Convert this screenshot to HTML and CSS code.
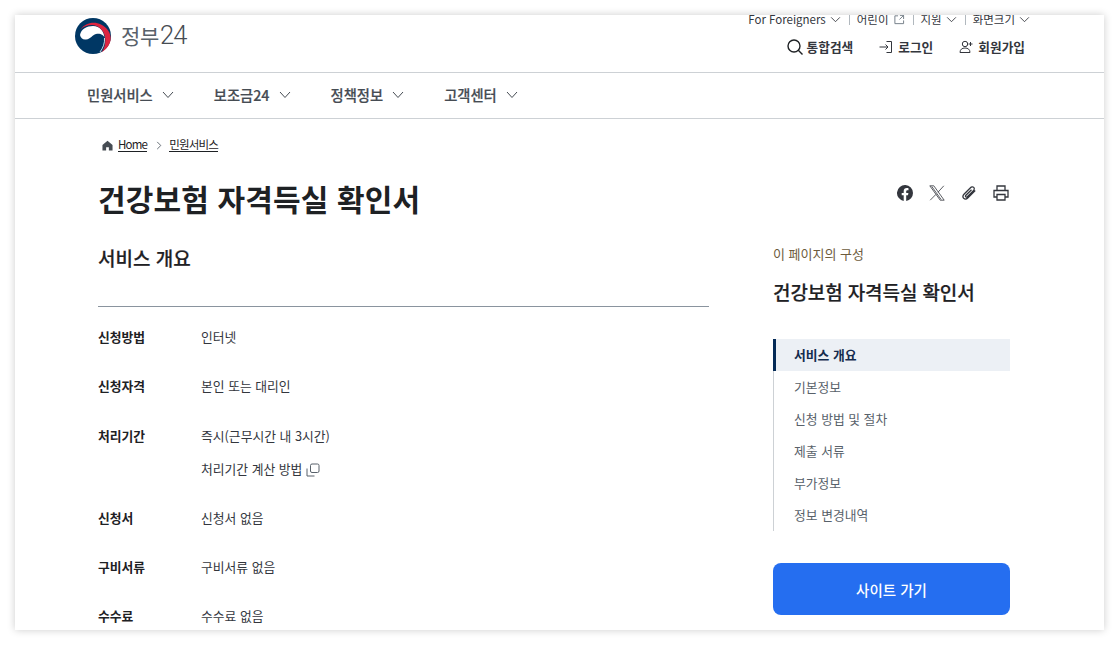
FILE: index.html
```html
<!DOCTYPE html>
<html lang="ko">
<head>
<meta charset="utf-8">
<title>건강보험 자격득실 확인서</title>
<link rel="stylesheet" href="styles.css">
</head>
<body>
<div class="frame">
  <header class="top">
    <a class="logo">
      <svg class="logo-mark" viewBox="0 0 36 36" width="36" height="36">
        <circle cx="18" cy="18" r="18" fill="#003764"/>
        <path d="M5 17C6 11 12 8 18 8c7 0 11 5 11.500 12-.5-3-4.500-5-8.500-4-4 1-5 5-10 5.500-3 .5-5.500-1.500-6-4.500z" fill="#fff"/>
        <path d="M29.500 20c.5 5-1.500 10-4.500 14" stroke="#fff" stroke-width=".8" fill="none"/>
        <path d="M5.500 11.500C10 5 19 3 26 6.500 33 10 36.500 16 35.500 22.500 34.500 27.500 31 31.500 26.500 34.500 29.500 30 31 25 30 19 29 12 23 7 17 7 12 7 8.500 8.500 5.500 11.500z" fill="#dc2540"/>
      </svg>
      <span class="logo-text">정부<span class="logo-num">24</span></span>
    </a>
    <div class="top-right">
      <ul class="util">
        <li>For Foreigners <svg class="chev-s" viewBox="0 0 12 8"><path d="M1 1.500l5 5 5-5"/></svg></li>
        <li>어린이 <svg class="ext" viewBox="0 0 12 12"><path d="M5 2H1.500v8.500H11V7M7 1.500h4v4M11 1.500L6.500 6"/></svg></li>
        <li>지원 <svg class="chev-s" viewBox="0 0 12 8"><path d="M1 1.500l5 5 5-5"/></svg></li>
        <li>화면크기 <svg class="chev-s" viewBox="0 0 12 8"><path d="M1 1.500l5 5 5-5"/></svg></li>
      </ul>
      <div class="actions">
        <a class="act"><svg class="ic-search" viewBox="0 0 16 16"><circle cx="7" cy="7" r="6"/><path d="M11.300 11.300L15.500 15.500"/></svg>통합검색</a>
        <a class="act"><svg class="ic-sm" viewBox="0 0 14 14"><path d="M7.500 1.500H12.500v11H7.500M.5 7h8.500M6.500 4.500L9 7l-2.500 2.500"/></svg>로그인</a>
        <a class="act"><svg class="ic-sm" viewBox="0 0 14 14"><circle cx="6" cy="4" r="2.700"/><path d="M1 12.500c0-3 2-4.500 5-4.500s5 1.500 5 4.500zM11.500 2v4M9.500 4h4"/></svg>회원가입</a>
      </div>
    </div>
  </header>
  <nav class="gnb">
    <a>민원서비스 <svg class="chev" viewBox="0 0 12 8"><path d="M1 1l5 5.500L11 1"/></svg></a>
    <a>보조금24 <svg class="chev" viewBox="0 0 12 8"><path d="M1 1l5 5.500L11 1"/></svg></a>
    <a>정책정보 <svg class="chev" viewBox="0 0 12 8"><path d="M1 1l5 5.500L11 1"/></svg></a>
    <a>고객센터 <svg class="chev" viewBox="0 0 12 8"><path d="M1 1l5 5.500L11 1"/></svg></a>
  </nav>
  <div class="page">
    <div class="crumbs">
      <svg class="home" viewBox="0 0 12 12"><path d="M6 .8L.5 5.500V11.500h4V8h3v3.500h4V5.500z"/></svg>
      <a>Home</a>
      <svg class="crumb-sep" viewBox="0 0 6 10"><path d="M1 1l4 4-4 4"/></svg>
      <a>민원서비스</a>
    </div>
    <div class="title-row">
      <h1>건강보험 자격득실 확인서</h1>
      <div class="share">
        <svg class="ic-fb" viewBox="0 0 16 16"><path d="M16 8a8 8 0 1 0-9.300 7.900v-5.600h-2V8h2V6.200c0-2 1.200-3.100 3-3.100.9 0 1.800.2 1.800.2v2h-1c-1 0-1.300.6-1.300 1.200V8h2.200l-.4 2.300H9.200v5.600A8 8 0 0 0 16 8z"/></svg>
        <svg class="ic-line" viewBox="0 0 16 16"><path d="M.8.8h4L15.200 15.200h-4zM14.800.8L9 7.200M7 9.300L1.200 15.200M2.800 1.500l9.300 13"/></svg>
        <svg class="ic-line ic-thick" viewBox="0 0 16 16"><path d="M14.200 5.500L7 12.800c-1.300 1.300-3.100 1.600-4.300.5-1.100-1.200-.8-3 .5-4.300l6.300-6.300c.9-.9 2.300-1.200 3.200-.3.900.9.600 2.300-.3 3.200L6.300 11.700c-.5.500-1.200.6-1.600.2-.4-.4-.3-1.100.2-1.600l5.600-5.600"/></svg>
        <svg class="ic-line ic-thick" viewBox="0 0 16 16"><path d="M4 5V1h8v4M4 12H1V5.500h14V12h-3M4 9.500h8V15H4z"/></svg>
      </div>
    </div>
    <div class="columns">
      <main class="main">
        <h2>서비스 개요</h2>
        <dl class="info">
          <div class="row"><dt>신청방법</dt><dd>인터넷</dd></div>
          <div class="row"><dt>신청자격</dt><dd>본인 또는 대리인</dd></div>
          <div class="row"><dt>처리기간</dt><dd>즉시(근무시간 내 3시간)<p class="calc">처리기간 계산 방법 <svg class="ic-copy" viewBox="0 0 14 14"><path d="M1 5.500V13h7.500"/><rect x="4.500" y="1" width="8.500" height="8.500" rx="1.500"/></svg></p></dd></div>
          <div class="row"><dt>신청서</dt><dd>신청서 없음</dd></div>
          <div class="row"><dt>구비서류</dt><dd>구비서류 없음</dd></div>
          <div class="row"><dt>수수료</dt><dd>수수료 없음</dd></div>
        </dl>
      </main>
      <aside class="side">
        <p class="side-label">이 페이지의 구성</p>
        <p class="side-title">건강보험 자격득실 확인서</p>
        <ul class="toc">
          <li class="on">서비스 개요</li>
          <li>기본정보</li>
          <li>신청 방법 및 절차</li>
          <li>제출 서류</li>
          <li>부가정보</li>
          <li>정보 변경내역</li>
        </ul>
        <a class="go">사이트 가기</a>
      </aside>
    </div>
  </div>
</div>
</body>
</html>
```
FILE: styles.css
```css
* { box-sizing: border-box; }
html, body { margin: 0; height: 645px; overflow: hidden; background: #fff; }
body {
  padding: 15px;
  font-family: "Noto Sans CJK KR", "Noto Sans", sans-serif;
  color: #1e2124;
}
.frame {
  height: 615px;
  overflow: hidden;
  background: #fff;
  box-shadow: 0 0 8px rgba(0,0,0,.2);
}
ul, dl, dd, p, h1, h2 { margin: 0; padding: 0; }
ul { list-style: none; }
svg { fill: none; stroke: currentColor; flex: none; }

.top {
  height: 58px;
  border-bottom: 1px solid #cdd1d5;
  display: flex;
  justify-content: space-between;
  padding: 0 79px 0 60px;
}
.logo { display: flex; align-items: center; gap: 10px; height: 39px; padding-top: 3px; }
.logo-mark { stroke: none; }
.logo-text { font-size: 21px; letter-spacing: -.3px; color: #58616a; line-height: 1; }
.logo-num { font-family: Roboto, sans-serif; font-weight: 300; font-size: 25.500px; letter-spacing: -1px; margin-left: 1px; color: #464c53; }
.top-right { display: flex; flex-direction: column; align-items: flex-end; }
.util {
  display: flex;
  font-size: 11.500px;
  line-height: 14px;
  height: 10px;
  color: #33363d;
  margin-right: -5px;
  margin-top: -2px;
}
.util li { display: flex; align-items: center; gap: 4px; padding: 0 0 0 7px; margin-left: 8px; border-left: 1px solid #b1b8be; height: 12px; }
.util li:first-child { border-left: 0; padding: 0; margin-left: 0; }
.chev-s { width: 11px; height: 7px; color: #33363d; }
.ext { width: 12px; height: 11px; color: #6d7882; }
.actions { display: flex; gap: 26px; margin-top: 14px; }
.act { display: flex; align-items: center; gap: 3px; font-size: 12.700px; font-weight: 700; color: #33363d; line-height: 20px; }
.act:first-child { gap: 4px; }
.act:nth-child(2), .act:nth-child(3) { gap: 5px; }
.ic-search { width: 16px; height: 16px; color: #1e2124; stroke-width: 1.400; }
.ic-sm { width: 14px; height: 14px; color: #33363d; }

.gnb {
  height: 46px;
  display: flex;
  align-items: center;
  padding: 0 0 3px 72px;
  gap: 40px;
  border-bottom: 1px solid #cdd1d5;
  font-size: 14.300px;
  font-weight: 500;
  color: #464c53;
  -webkit-text-stroke: .2px #464c53;
}
.gnb a { display: flex; align-items: center; gap: 8px; }
.chev { width: 12px; height: 8px; color: #464c53; margin-left: 1px; margin-top: 2px; }

.page { padding: 0 94px 0 83px; }
.crumbs { display: flex; align-items: center; height: 20px; margin-top: 16px; font-size: 11.500px; letter-spacing: -.8px; color: #1e2124; padding-left: 4px; }
.crumbs a { border-bottom: 1px solid #1e2124; line-height: 13px; }
.home { width: 11px; height: 11px; fill: #464c53; stroke: none; margin-right: 5px; }
.crumb-sep { width: 6px; height: 9px; color: #58616a; margin: 0 7px 0 9px; }

.title-row { display: flex; justify-content: space-between; align-items: center; margin-top: 20px; height: 46px; }
h1 { font-size: 30px; font-weight: 700; line-height: 46px; letter-spacing: .15px; color: #1e2124; }
.share { display: flex; gap: 16px; margin-right: 1px; margin-bottom: 11px; color: #33363d; }
.share svg { width: 16px; height: 16px; }
.ic-fb { fill: #33363d; stroke: none; }
.ic-line { stroke-width: .8; }
.ic-thick { stroke-width: 1.300; }

.columns { display: flex; justify-content: space-between; margin-top: 15px; }
.main { width: 611px; }
h2 { font-size: 19px; font-weight: 500; line-height: 28px; padding-bottom: 34px; border-bottom: 1px solid #8a949e; margin-top: 8px; color: #1e2124; -webkit-text-stroke: .2px #1e2124; }
.info { padding-top: 20px; font-size: 12.800px; line-height: 20px; }
.row { display: flex; padding-bottom: 29.300px; }
dt { width: 103px; font-weight: 700; color: #1e2124; }
dd { color: #33363d; }
.calc { margin-top: 13px; display: flex; align-items: center; gap: 4px; }
.ic-copy { width: 14px; height: 14px; color: #58616a; margin-top: 2px; }

.side { width: 237px; padding-top: 8px; }
.side-label { font-size: 13px; line-height: 20px; color: #6d5c3d; }
.side-title { font-size: 19px; font-weight: 500; line-height: 28px; margin-top: 14px; color: #1e2124; -webkit-text-stroke: .2px #1e2124; letter-spacing: -.1px; }
.toc { margin-top: 33px; border-left: 1px solid #cdd1d5; }
.toc li { height: 32px; line-height: 32px; padding-left: 20px; font-size: 12.800px; color: #58616a; }
.toc li.on { margin-left: -1px; padding-left: 18px; border-left: 3px solid #052b57; background: #ecf0f5; font-weight: 700; color: #142c4e; }
.go {
  display: flex;
  align-items: center;
  justify-content: center;
  height: 52px;
  margin-top: 32px;
  border-radius: 8px;
  background: #256ef0;
  color: #fff;
  font-size: 14.500px;
  font-weight: 500;
}
```
